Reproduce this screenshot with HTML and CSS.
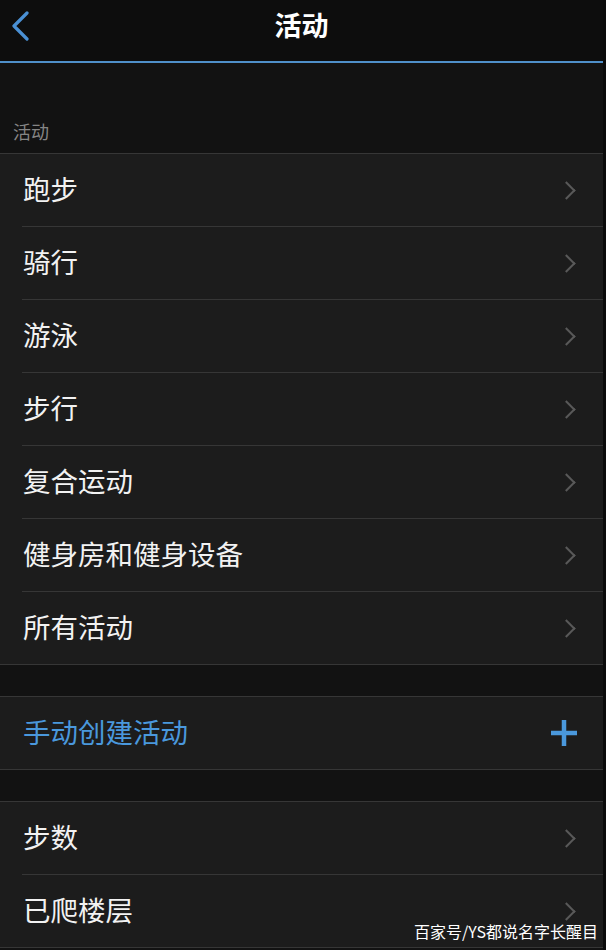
FILE: index.html
```html
<!DOCTYPE html>
<html lang="zh-CN">
<head>
    <meta charset="UTF-8">
    <meta name="viewport" content="width=device-width, initial-scale=1.0">
    <title>活动</title>
    <link rel="stylesheet" href="styles.css">
</head>
<body>

<div class="app">
    <div class="topbar">
        <span class="back">
            <svg width="20" height="30" viewBox="0 0 20 30"><path d="M17 2 L4 15 L17 28" fill="none" stroke="#4a90d4" stroke-width="3.2" stroke-linecap="round" stroke-linejoin="round"/></svg>
        </span>
        <h1>活动</h1>
    </div>

    <div class="section-label">活动</div>
    <div class="group">
        <div class="row"><span>跑步</span><i class="chev"></i></div>
        <div class="row"><span>骑行</span><i class="chev"></i></div>
        <div class="row"><span>游泳</span><i class="chev"></i></div>
        <div class="row"><span>步行</span><i class="chev"></i></div>
        <div class="row"><span>复合运动</span><i class="chev"></i></div>
        <div class="row"><span>健身房和健身设备</span><i class="chev"></i></div>
        <div class="row"><span>所有活动</span><i class="chev"></i></div>
    </div>

    <div class="spacer"></div>
    <div class="group">
        <div class="row add-row">
            <span>手动创建活动</span>
            <svg width="28" height="28" viewBox="0 0 28 28"><path d="M14 1 V27 M1 14 H27" stroke="#4a98dc" stroke-width="4.5"/></svg>
        </div>
    </div>

    <div class="spacer"></div>
    <div class="group">
        <div class="row"><span>步数</span><i class="chev"></i></div>
        <div class="row"><span>已爬楼层</span><i class="chev"></i></div>
    </div>
</div>

<div class="watermark">百家号/YS都说名字长醒目</div>

</body>
</html>
```

FILE: styles.css
```css
body {
    margin: 0;
    background-color: #0b0b0b;
    font-family: "Noto Sans CJK SC", "Noto Sans", sans-serif;
    color: #f2f2f2;
    height: 950px;
    overflow: hidden;
    position: relative;
}
.app {
    width: 603px;
    background-color: #121212;
    min-height: 950px;
}
.topbar {
    height: 61px;
    background-color: #0d0d0d;
    border-bottom: 2px solid #4f8fc9;
    display: flex;
    align-items: flex-start;
    justify-content: center;
    position: relative;
}
.topbar h1 {
    margin: 0;
    font-size: 27px;
    line-height: 50px;
    font-weight: bold;
    color: #ffffff;
}
.back {
    position: absolute;
    left: 10px;
    top: 11px;
}
.section-label {
    padding: 56px 0 10px 13px;
    font-size: 18px;
    line-height: 24px;
    color: #858585;
}
.group {
    background-color: #1c1c1c;
    border-top: 1px solid #363636;
    border-bottom: 1px solid #363636;
}
.row {
    height: 72px;
    margin-left: 22px;
    padding-right: 28px;
    border-bottom: 1px solid #363636;
    display: flex;
    align-items: center;
    justify-content: space-between;
    font-size: 27.5px;
}
.row:last-child {
    border-bottom: none;
}
.row span {
    padding-left: 1px;
    padding-bottom: 4px;
}
.chev {
    width: 11px;
    height: 11px;
    border-top: 2.5px solid #595959;
    border-right: 2.5px solid #595959;
    transform: rotate(45deg);
    margin-right: 2px;
}
.add-row {
    color: #4a98dc;
    padding-right: 25px;
}
.spacer {
    height: 31px;
}
.watermark {
    position: absolute;
    right: 8px;
    top: 920px;
    font-size: 16px;
    line-height: 22px;
    color: #ffffff;
}
```
